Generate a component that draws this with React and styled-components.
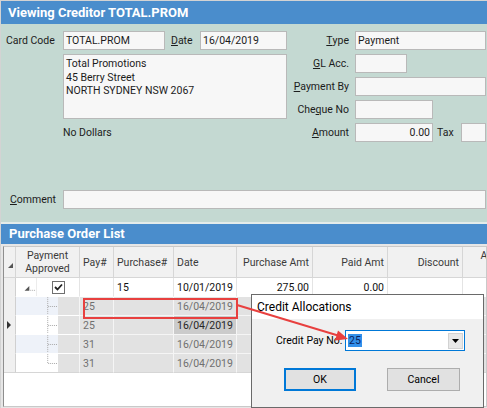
import React from "react";
import styled, { createGlobalStyle } from "styled-components";

const FONT = `Roboto, "Liberation Sans", Arial, sans-serif`;
const BLUE = "#4a8dcc";
const RED = "#e8403f";
const COLS = "12px 64px 34px 60px 63px 76px 75px 75px 80px";

const GlobalStyle = createGlobalStyle`
  html, body { margin: 0; padding: 0; background: #ffffff; }
  body { font-family: ${FONT}; }
`;

const Window = styled.div`
  position: relative;
  width: 487px;
  height: 408px;
  overflow: hidden;
  box-sizing: border-box;
  border-top: 1px solid #d3d3d3;
  border-left: 1px solid #d3d3d3;
  background: #c4d9d2;
  font-family: ${FONT};
  font-size: 10.5px;
  color: #1c1c1c;
`;

const TitleBar = styled.div`
  height: 23px;
  line-height: 23px;
  padding-left: 7px;
  background: ${BLUE};
  color: #ffffff;
  font-size: 13px;
  font-weight: 700;
`;

const Form = styled.div`
  display: grid;
  grid-template-columns: 57px 102px 35px 87px 68px 1fr;
  grid-template-rows: repeat(5, 19px);
  grid-template-areas:
    "cl cf dl df tl tf"
    ".  ad ad ad gl gf"
    ".  ad ad ad pl pf"
    ".  ad ad ad ql qf"
    ".  nd nd nd al af";
  row-gap: 4px;
  padding: 7px 1px 0 5px;
`;

const Label = styled.div`
  grid-area: ${(p) => p.$area};
  display: flex;
  align-items: center;
  justify-content: ${(p) => (p.$right ? "flex-end" : "flex-start")};
  padding-left: ${(p) => p.$indent || 0}px;
  padding-right: ${(p) => (p.$right ? 6 : 0)}px;
  white-space: nowrap;
`;

const Field = styled.div`
  grid-area: ${(p) => p.$area};
  box-sizing: border-box;
  height: 19px;
  width: ${(p) => (p.$w ? `${p.$w}px` : "auto")};
  flex: ${(p) => (p.$grow ? 1 : "none")};
  display: flex;
  align-items: center;
  justify-content: ${(p) => (p.$num ? "flex-end" : "flex-start")};
  padding: 0 2px;
  background: #f7f7f7;
  border: 1px solid #b9b9b9;
  white-space: nowrap;
`;

const Memo = styled.div`
  grid-area: ad;
  box-sizing: border-box;
  padding: 2px 2px;
  line-height: 13.5px;
  background: #f7f7f7;
  border: 1px solid #b9b9b9;
`;

const AmountGroup = styled.div`
  grid-area: af;
  display: flex;
  align-items: center;
`;

const TaxLabel = styled.span`
  width: 28px;
  padding-left: 4px;
  box-sizing: border-box;
`;

const CommentRow = styled.div`
  display: grid;
  grid-template-columns: 57px 1fr;
  height: 19px;
  margin-top: 48px;
  padding: 0 1px 0 5px;
`;

const Spacer = styled.div`
  height: 13px;
`;

const Separator = styled.div`
  height: 2px;
  background: #e4ecea;
`;

const Panel = styled.div`
  height: 184px;
  background: #e6e6e6;
`;

const PanelTitle = styled.div`
  height: 20px;
  line-height: 20px;
  padding-left: 8px;
  background: ${BLUE};
  color: #ffffff;
  font-size: 13px;
  font-weight: 700;
`;

const GridFrame = styled.div`
  height: 161px;
  margin: 2px 0 0 2px;
  box-sizing: border-box;
  border: 1px solid #c9c9c9;
  border-left-color: #8e8e8e;
  background: #ffffff;
  overflow: hidden;
`;

const HeaderRow = styled.div`
  display: grid;
  grid-template-columns: ${COLS};
  height: 31px;
  width: max-content;
`;

const HeaderCell = styled.div`
  box-sizing: border-box;
  display: flex;
  align-items: center;
  justify-content: ${(p) => p.$align || "flex-start"};
  padding: 0 3px;
  text-align: center;
  line-height: 13px;
  color: #3b3b3b;
  background: #f1f1f1;
  border-right: 1px solid #d6d6d6;
  border-bottom: 1px solid #d6d6d6;
  white-space: nowrap;
`;

const CornerCell = styled(HeaderCell)`
  align-items: flex-end;
  justify-content: flex-end;
  padding: 0 2px 9px 0;
`;

const DataRow = styled.div`
  display: grid;
  grid-template-columns: ${COLS};
  height: 19px;
  width: max-content;
`;

const Indicator = styled.div`
  box-sizing: border-box;
  display: flex;
  align-items: center;
  justify-content: center;
  background: #f0f0f0;
  border-right: 1px solid #d0d0d0;
  border-bottom: 1px solid ${(p) => (p.$last ? "#d6d6d6" : "#f0f0f0")};
`;

const Cell = styled.div`
  box-sizing: border-box;
  display: flex;
  align-items: center;
  justify-content: ${(p) => (p.$num ? "flex-end" : "flex-start")};
  padding: 0 3px;
  white-space: nowrap;
  color: ${(p) => (p.$current ? "#262626" : p.$child ? "#707070" : "#111111")};
  background: ${(p) => (p.$current ? "#cbcbcb" : p.$child ? "#e2e2e2" : "#ffffff")};
  border-right: 1px solid ${(p) => (p.$child ? "#f5f5f5" : "#e4e4e4")};
  border-bottom: 1px solid ${(p) => (p.$child ? (p.$last ? "#d6d6d6" : "#f5f5f5") : "#ffffff")};
`;

const PaymentCell = styled.div`
  box-sizing: border-box;
  display: flex;
  border-right: 1px solid ${(p) => (p.$child ? "#f5f5f5" : "#e4e4e4")};
  border-bottom: 1px solid ${(p) => (p.$last ? "#d6d6d6" : "transparent")};
`;

const TreeArea = styled.div`
  width: ${(p) => p.$w}px;
  display: flex;
  background: ${(p) => (p.$band ? "#eef2f9" : "#ffffff")};
  border-right: 1px solid ${(p) => (p.$line ? "#ececec" : "transparent")};
  box-sizing: border-box;
`;

const Stub = styled.div`
  flex: 1;
  display: flex;
  align-items: center;
  justify-content: center;
  background: ${(p) => (p.$child ? "#e2e2e2" : "#ffffff")};
`;

const CheckBox = styled.div`
  width: 13px;
  height: 13px;
  box-sizing: border-box;
  border: 1px solid #6f6f6f;
  background: #ffffff;
  display: flex;
  align-items: center;
  justify-content: center;
`;

const RedBox = styled.div`
  position: absolute;
  left: 82px;
  top: 297px;
  width: 155px;
  height: 21px;
  box-sizing: border-box;
  border: 2px solid ${RED};
`;

const Annotation = styled.svg`
  position: absolute;
  left: 0;
  top: 0;
  pointer-events: none;
`;

const Dialog = styled.div`
  position: absolute;
  left: 250px;
  top: 293px;
  width: 233px;
  height: 114px;
  box-sizing: border-box;
  border: 1px solid #6a6a6a;
  background: #f0f0f0;
  display: flex;
  flex-direction: column;
`;

const DialogTitle = styled.div`
  height: 24px;
  line-height: 24px;
  padding-left: 5px;
  background: #ffffff;
  color: #000000;
  font-size: 12px;
`;

const DialogBody = styled.div`
  display: flex;
  flex-direction: column;
  padding-top: 11px;
  gap: 17px;
`;

const ComboRow = styled.div`
  display: flex;
  align-items: center;
  padding-left: 24px;
  color: #000000;
`;

const ComboLabel = styled.span`
  width: 69px;
`;

const Combo = styled.div`
  width: 120px;
  height: 21px;
  box-sizing: border-box;
  border: 1px solid #0078d7;
  background: #ffffff;
  display: flex;
  align-items: center;
  padding-left: 2px;
`;

const Selected = styled.span`
  padding: 0 1px;
  line-height: 13px;
  background: #3390ea;
  color: #0a1f5c;
`;

const DropButton = styled.div`
  margin-left: auto;
  margin-right: 1px;
  width: 15px;
  height: 16px;
  box-sizing: border-box;
  border: 1px solid #d2d2d2;
  background: #e8e8e8;
  display: flex;
  align-items: center;
  justify-content: center;
`;

const ButtonRow = styled.div`
  display: flex;
  padding-left: 32px;
  gap: 31px;
`;

const Button = styled.div`
  width: ${(p) => p.$w}px;
  height: 23px;
  box-sizing: border-box;
  display: flex;
  align-items: center;
  justify-content: center;
  background: #e1e1e1;
  color: #000000;
  border: ${(p) => (p.$primary ? "2px solid #0078d7" : "1px solid #adadad")};
`;

const CornerGlyph = () => (
  <svg width="5" height="5" viewBox="0 0 5 5">
    <polygon points="5,0 5,5 0,5" fill="#555555" />
  </svg>
);

const RowPointer = () => (
  <svg width="5" height="8" viewBox="0 0 5 8">
    <polygon points="0,0 4,4 0,8" fill="#333333" />
  </svg>
);

const Tick = () => (
  <svg width="9" height="8" viewBox="0 0 9 8">
    <polyline points="1,4 3.5,6.5 8,1.5" fill="none" stroke="#222222" strokeWidth="1.8" />
  </svg>
);

const ParentTree = () => (
  <svg width="21" height="18" viewBox="0 0 21 18">
    <polygon points="14,8 14,13 9,13" fill="#555555" />
    <line x1="15" y1="12.5" x2="21" y2="12.5" stroke="#a8a8a8" strokeDasharray="1 1" />
  </svg>
);

const ChildTree = ({ last }) => (
  <svg width="42" height="18" viewBox="0 0 42 18">
    <line x1="32.5" y1="0" x2="32.5" y2={last ? 9.5 : 18} stroke="#a8a8a8" strokeDasharray="1 1" />
    <line x1="33" y1="9.5" x2="42" y2="9.5" stroke="#a8a8a8" strokeDasharray="1 1" />
  </svg>
);

const children = [
  { pay: "25", date: "16/04/2019", band: true },
  { pay: "25", date: "16/04/2019", current: true },
  { pay: "31", date: "16/04/2019", band: true },
  { pay: "31", date: "16/04/2019", last: true },
];

export default function App() {
  return (
    <>
      <GlobalStyle />
      <Window>
        <TitleBar>Viewing Creditor TOTAL.PROM</TitleBar>

        <Form>
          <Label $area="cl">Card Code</Label>
          <Field $area="cf">TOTAL.PROM</Field>
          <Label $area="dl" $indent={6}><u>D</u>ate</Label>
          <Field $area="df">16/04/2019</Field>
          <Label $area="tl" $right><u>T</u>ype</Label>
          <Field $area="tf">Payment</Field>

          <Memo>
            Total Promotions<br />
            45 Berry Street<br />
            NORTH SYDNEY NSW 2067
          </Memo>
          <Label $area="gl" $right><u>G</u>L Acc.</Label>
          <Field $area="gf" $w={52} />
          <Label $area="pl" $right><u>P</u>ayment By</Label>
          <Field $area="pf" />
          <Label $area="ql" $right>Che<u>q</u>ue No</Label>
          <Field $area="qf" $w={78} />
          <Label $area="nd">No Dollars</Label>
          <Label $area="al" $right><u>A</u>mount</Label>
          <AmountGroup>
            <Field $w={78} $num>0.00</Field>
            <TaxLabel>Tax</TaxLabel>
            <Field $grow />
          </AmountGroup>
        </Form>

        <CommentRow>
          <Label $indent={4}><u>C</u>omment</Label>
          <Field />
        </CommentRow>
        <Spacer />
        <Separator />

        <Panel>
          <PanelTitle>Purchase Order List</PanelTitle>
          <GridFrame>
            <HeaderRow>
              <CornerCell>
                <CornerGlyph />
              </CornerCell>
              <HeaderCell $align="center">Payment<br />Approved</HeaderCell>
              <HeaderCell>Pay#</HeaderCell>
              <HeaderCell>Purchase#</HeaderCell>
              <HeaderCell>Date</HeaderCell>
              <HeaderCell $align="flex-end">Purchase Amt</HeaderCell>
              <HeaderCell $align="flex-end">Paid Amt</HeaderCell>
              <HeaderCell $align="flex-end">Discount</HeaderCell>
              <HeaderCell $align="center">Allocated<br />Amt</HeaderCell>
            </HeaderRow>

            <DataRow>
              <Indicator />
              <PaymentCell>
                <TreeArea $w={21} $line>
                  <ParentTree />
                </TreeArea>
                <Stub>
                  <CheckBox><Tick /></CheckBox>
                </Stub>
              </PaymentCell>
              <Cell />
              <Cell>15</Cell>
              <Cell>10/01/2019</Cell>
              <Cell $num>275.00</Cell>
              <Cell $num>0.00</Cell>
              <Cell $num />
              <Cell $num />
            </DataRow>

            {children.map((r, i) => (
              <DataRow key={i}>
                <Indicator $last={r.last}>{r.current && <RowPointer />}</Indicator>
                <PaymentCell $child $last={r.last}>
                  <TreeArea $w={42} $band={r.band}>
                    <ChildTree last={r.last} />
                  </TreeArea>
                  <Stub $child />
                </PaymentCell>
                <Cell $child $last={r.last}>{r.pay}</Cell>
                <Cell $child $last={r.last} />
                <Cell $child $last={r.last} $current={r.current}>{r.date}</Cell>
                <Cell $child $last={r.last} />
                <Cell $child $last={r.last} />
                <Cell $child $last={r.last} />
                <Cell $child $last={r.last} />
              </DataRow>
            ))}
          </GridFrame>
        </Panel>

        <Dialog>
          <DialogTitle>Credit Allocations</DialogTitle>
          <DialogBody>
            <ComboRow>
              <ComboLabel>Credit Pay No:</ComboLabel>
              <Combo>
                <Selected>25</Selected>
                <DropButton>
                  <svg width="7" height="4" viewBox="0 0 7 4">
                    <polygon points="0,0 7,0 3.5,4" fill="#000000" />
                  </svg>
                </DropButton>
              </Combo>
            </ComboRow>
            <ButtonRow>
              <Button $w={72} $primary>OK</Button>
              <Button $w={73}>Cancel</Button>
            </ButtonRow>
          </DialogBody>
        </Dialog>

        <RedBox />
        <Annotation width="487" height="408" viewBox="0 0 487 408">
          <line x1="236" y1="304" x2="337" y2="334.5" stroke={RED} strokeWidth="2" />
          <polygon points="347,338 334,339.6 337,329.6" fill={RED} />
        </Annotation>
      </Window>
    </>
  );
}
